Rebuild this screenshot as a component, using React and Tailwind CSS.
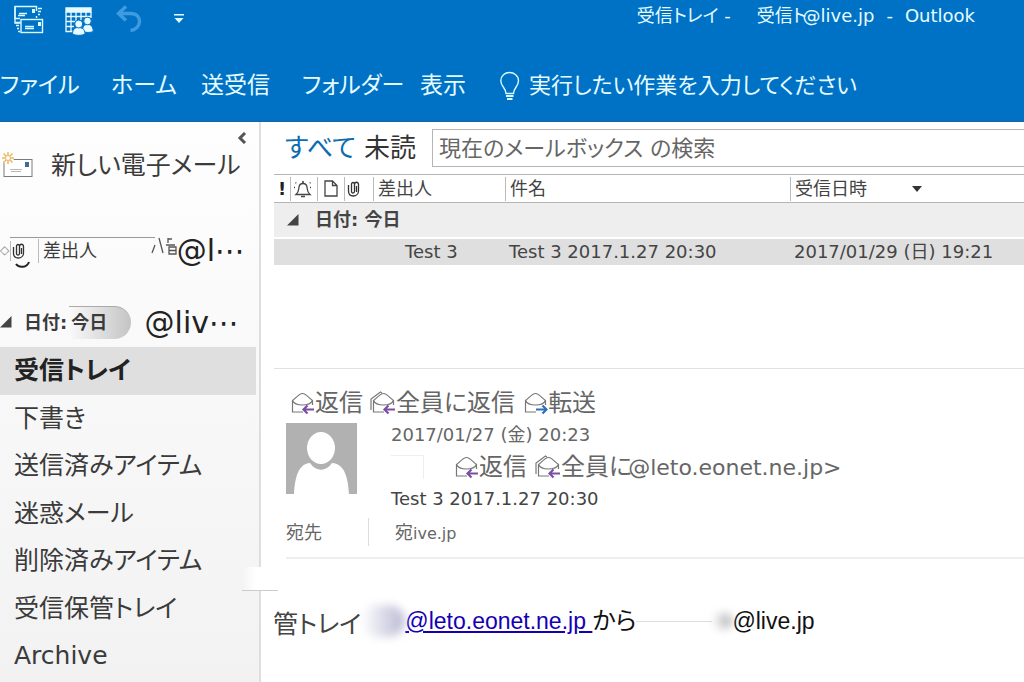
import { useState } from "react";
import clsx from "clsx";

const folders = [
  "受信トレイ",
  "下書き",
  "送信済みアイテム",
  "迷惑メール",
  "削除済みアイテム",
  "受信保管トレイ",
  "Archive",
];

const tabs = [
  { name: "ファイル", width: "w-[111px]" },
  { name: "ホーム", width: "w-[90px]" },
  { name: "送受信", width: "w-[101px]" },
  { name: "フォルダー", width: "w-[118px]" },
  { name: "表示", width: "w-[79px]" },
];

const SendReceiveIcon = () => (
  <svg width="30" height="30" viewBox="0 0 30 30" fill="none" stroke="#d9fbff" strokeWidth="1.4">
    <path d="M6 16.5V18H1V1.500H22.500V6M22.500 11V13" />
    <path d="M1 1.500V13.500H6" />
    <path d="M5 8.500H13M4 10.500H11M24 3.500H28M24 6.500H27M24 9.500H26M1 17.500H5M2 20.500H5M3 23.500H5M4 26.500H6" />
    <rect x="7" y="14.500" width="21.500" height="13" />
    <path d="M11 21.500H20M11 23.500H20" />
    <path d="M18 4h3v4h-3zM24 17h3v4h-3z" fill="#d9fbff" stroke="none" />
  </svg>
);

const CalendarPeopleIcon = () => (
  <svg width="30" height="30" viewBox="0 0 30 30" fill="none" stroke="#e6fbff" strokeWidth="1.3">
    <path d="M1 1H26V5H1z" fill="#e6fbff" />
    <path d="M1 5V24.500H8M26 5V11M6 5V24.500M11 5V15M16 5V13M21 5V10M1 9.500H26M1 14.500H11M1 19.500H9" />
    <g fill="#e6fbff" stroke="#0072c6" strokeWidth="1">
      <path d="M17.500 24c0-5 2-6.500 5-6.500s5.700 1.500 5.700 7c-2 1.300-8 1.300-10.700 0z" />
      <circle cx="22.500" cy="14" r="3.800" />
      <path d="M7.500 27c0-5 2.500-6.500 6-6.500s6.500 1.500 6.500 6.500c-2.500 1.800-10 1.800-12.500 0z" />
      <circle cx="13.700" cy="17" r="4" />
    </g>
  </svg>
);

const UndoIcon = () => (
  <svg width="28" height="28" viewBox="0 0 28 28" fill="none" stroke="#3f9be0" strokeWidth="3.400">
    <path d="M11 1.500L3.500 8.500L11 15.500M4 8.500H15.500C22 8.500 24.500 12.500 24.500 16.500S21 25 15.500 25.500" />
  </svg>
);

const BulbIcon = () => (
  <svg width="22" height="30" viewBox="0 0 22 30" fill="none" stroke="#d9fbff" strokeWidth="1.400">
    <path d="M7 22.500C7 17 1.800 15.500 1.800 9.800C1.800 4.500 6 1.500 10.500 1.500S19.500 4.500 19.500 9.800C19.500 15.500 14.500 17 14.500 22.500z" />
    <path d="M7 25H14.500M8 28H13.500" strokeWidth="2" />
  </svg>
);

const NewMailIcon = () => (
  <svg width="34" height="28" viewBox="0 0 34 28" fill="none" className="shrink-0">
    <rect x="4" y="7.500" width="28" height="17" fill="#fff" stroke="#7b7b7b" />
    <path d="M10 17.500H22M11 19.500H21" stroke="#b9b9b9" />
    <rect x="25" y="10" width="4" height="5" fill="#3f6f8f" />
    <circle cx="8" cy="6" r="6" fill="#fdfdfd" />
    <path d="M8 0V12M2 6H14M3.500 1.500L12.500 10.500M12.500 1.500L3.500 10.500" stroke="#edb95e" strokeWidth="1.500" />
    <circle cx="8" cy="6" r="2.500" fill="#fff" stroke="#edb95e" />
  </svg>
);

const ClipIcon = () => (
  <svg width="13" height="16" viewBox="0 0 13 16" fill="none" stroke="#333" strokeWidth="1.300">
    <path d="M1.500 4V10C1.500 13 3.500 15 6.300 15S11.500 13 11.500 10V3.500C11.500 .5 7.500 .5 7.500 3.500V10.500C7.500 12.500 4.500 12.500 4.500 10.500V3" />
    <path d="M4.500 3C4.500 1 7.500 1 7.500 3M9.500 5V11" />
  </svg>
);

const BellIcon = () => (
  <svg width="20" height="18" viewBox="0 0 20 18" fill="none" stroke="#444" strokeWidth="1.300">
    <path d="M3 14.500C6 12 5.500 10 6 7C6.400 4.500 8 3.500 10 3.500S13.600 4.500 14 7C14.500 10 14 12 17 14.500z" />
    <path d="M10 1V3.500M8 16.500H12" strokeWidth="1.600" />
    <path d="M2.500 2.500L4 4M1 7.500H3M17.500 2.500L16 4M17 7.500H19" strokeDasharray="1 1" />
  </svg>
);

const PageIcon = () => (
  <svg width="14" height="17" viewBox="0 0 14 17" fill="none" stroke="#444" strokeWidth="1.300">
    <path d="M1 1H8.500L13 5.500V16H1zM8.500 1V5.500H13" />
  </svg>
);

const EnvelopeIcon = ({ all, forward }) => (
  <svg width="26" height="24" viewBox="0 0 26 24" fill="none" stroke="#777" strokeWidth="1.200" className="shrink-0">
    {all && <path d="M1 19V8L10.500 1L12 2" />}
    <path d="M14 21H3.500V9.500C7 7 10 2.500 13.500 2.500S20 7 23.500 9.500V14" />
    <path d="M3.500 9.500C5 13 9 14 13.500 14S22 13 23.500 9.500" />
    <path
      d={forward ? "M14 18.500H24M20.500 14.500L24.500 18.500L20.500 22.500" : "M25 18.500H15M18.500 14.500L14.500 18.500L18.500 22.500"}
      stroke={forward ? "#2f6fb7" : "#7a4fa3"}
      strokeWidth="2.200"
    />
  </svg>
);

const Triangle = () => (
  <svg width="12" height="12" viewBox="0 0 12 12" className="shrink-0">
    <path d="M11.500 0V11.500H0z" fill="#444" />
  </svg>
);

const Header = () => (
  <header className="flex h-[122px] flex-col border-b border-[#1c62a0] bg-[#0072c6] text-[#e6fcff]">
    <div className="flex h-[50px] justify-between pl-[14px] pr-[49px]">
      <div className="flex items-start pt-[5px]">
        <button aria-label="すべて送受信" className="mr-[21px]">
          <SendReceiveIcon />
        </button>
        <button aria-label="予定表" className="mr-[20px] pt-[2px]">
          <CalendarPeopleIcon />
        </button>
        <button aria-label="元に戻す" className="mr-[31px]">
          <UndoIcon />
        </button>
        <button aria-label="カスタマイズ" className="pt-[9px]">
          <svg width="10" height="10" viewBox="0 0 10 10" fill="#e6fcff">
            <path d="M0 0H10V1.500H0zM0.500 4H9.500L5 9z" />
          </svg>
        </button>
      </div>
      <h1 className="flex whitespace-pre pt-1 text-[18px] leading-6">
        <span>受信トレイ -</span>
        <span className="ml-[26px]">受信ト</span>
        <span className="-ml-1">@live.jp</span>
        <span className="ml-3">-</span>
        <span className="ml-3">Outlook</span>
      </h1>
    </div>
    <nav className="flex h-[71px] items-center whitespace-nowrap text-[23px]">
      {tabs.map((tab) => (
        <button key={tab.name} className={clsx("shrink-0 text-left", tab.width)}>
          {tab.name}
        </button>
      ))}
      <button className="flex items-center gap-2 text-[22px]">
        <BulbIcon />
        実行したい作業を入力してください
      </button>
    </nav>
  </header>
);

const Sidebar = () => {
  const [selected, setSelected] = useState(folders[0]);

  return (
    <aside className="flex w-[261px] shrink-0 flex-col border-r-2 border-[#dedede] bg-linear-to-b from-[#fefefe] to-[#f2f2f2] text-[#3b3b3b]">
      <div className="flex h-[24px] justify-end pr-[12px] pt-[7px]">
        <button aria-label="折りたたむ">
          <svg width="10" height="12" viewBox="0 0 10 12" fill="none" stroke="#555" strokeWidth="3">
            <path d="M8 1L3 6L8 11" />
          </svg>
        </button>
      </div>
      <button className="flex h-[40px] items-center gap-[17px] whitespace-nowrap text-[25px]">
        <NewMailIcon />
        新しい電子メール
      </button>
      <div className="mt-[44px] flex h-[40px] items-center whitespace-nowrap pr-[14px]">
        <span className="w-[10px] overflow-hidden text-[12px] text-[#888]">◇</span>
        <div className="relative flex h-[26px] w-[146px] items-center border-t border-[#999] text-[18px]">
          <span className="flex h-5 items-center border-l border-[#bbb] pl-px">
            <ClipIcon />
          </span>
          <svg width="16" height="8" viewBox="0 0 16 8" fill="none" className="absolute left-[5px] top-[22px]">
            <path d="M1 4C4 8 12 8 14 2" stroke="#222" strokeWidth="2" />
          </svg>
          <span className="ml-[13px] border-l border-[#bbb] pl-1 leading-6">差出人</span>
        </div>
        <svg width="26" height="18" viewBox="0 0 26 18" fill="none" stroke="#555" strokeWidth="1.300" className="-ml-1 mb-2 shrink-0">
          <path d="M4 8L1 16M8 1L12 16M17 1V6M17 2H21M15 8H24M18 10H25V17H18zM18 13.500H25" />
        </svg>
        <span className="ml-auto text-[30px] text-[#222]">@l⋯</span>
      </div>
      <div className="mt-[32px] flex h-[40px] items-center justify-between pr-[20px]">
        <div className="flex items-center whitespace-nowrap text-[18px] font-bold">
          <Triangle />
          <span className="ml-3">日付:</span>
          <span className="ml-[2px] rounded-r-full border-t border-[#aaa] bg-linear-to-r from-transparent to-[#c4c4c4] pl-[2px] pr-6 leading-8">
            今日
          </span>
        </div>
        <span className="text-[30px] text-[#222]">@liv⋯</span>
      </div>
      <nav className="mt-[5px] grid flex-1 auto-rows-fr pb-[2px] pr-[3px]">
        {folders.map((folder) => (
          <button
            key={folder}
            onClick={() => setSelected(folder)}
            className={clsx(
              "pl-[14px] text-left text-[25px]",
              folder == selected && "bg-[#dfdfdf] font-bold text-[#222]"
            )}
          >
            {folder}
          </button>
        ))}
      </nav>
    </aside>
  );
};

const MessageList = () => (
  <section className="h-[247px] border-b border-[#e1e1e1]">
    <div className="flex h-[52px] items-center whitespace-nowrap">
      <button className="w-[79px] pl-[11px] text-left text-[26px] text-[#0b6cb0]">すべて</button>
      <button className="ml-[11px] text-[26px] text-[#333]">未読</button>
      <input
        aria-label="検索"
        placeholder="現在のメールボックス の検索"
        className="ml-4 h-[38px] min-w-0 flex-1 border border-r-0 border-[#b5b5b5] px-[6px] text-[22px] placeholder:text-[#666]"
      />
    </div>
    <table className="w-full table-fixed text-left text-[18px] text-[#444]">
      <colgroup>
        <col className="w-[16px]" />
        <col className="w-[27px]" />
        <col className="w-[27px]" />
        <col className="w-[29px]" />
        <col className="w-[132px]" />
        <col />
        <col className="w-[234px]" />
      </colgroup>
      <thead>
        <tr className="h-[28px] border-y border-[#b5b5b5] leading-6 *:p-0 *:font-normal">
          <th className="text-center text-[#222]">
            <b>!</b>
          </th>
          <th>
            <div className="flex h-6 items-center border-l border-[#bbb] pl-[2px]">
              <BellIcon />
            </div>
          </th>
          <th>
            <div className="flex h-6 items-center border-l border-[#bbb] pl-[6px]">
              <PageIcon />
            </div>
          </th>
          <th>
            <div className="flex h-6 items-center border-l border-[#bbb] pl-[2px]">
              <ClipIcon />
            </div>
          </th>
          <th>
            <div className="border-l border-[#bbb] pl-1">差出人</div>
          </th>
          <th>
            <div className="border-l border-[#bbb] pl-1">件名</div>
          </th>
          <th>
            <div className="flex items-center border-l border-[#bbb] pl-1">
              受信日時
              <svg width="10" height="6" viewBox="0 0 10 6" className="ml-[45px]">
                <path d="M0 0H10L5 6z" fill="#333" />
              </svg>
            </div>
          </th>
        </tr>
      </thead>
      <tbody>
        <tr className="h-[35px] border-b-2 border-white bg-[#eee]">
          <td colSpan={7} className="p-0 font-bold">
            <div className="flex items-center gap-4 pl-[13px] leading-6">
              <Triangle />
              日付: 今日
            </div>
          </td>
        </tr>
        <tr className="h-[27px] whitespace-nowrap bg-[#dfdfdf] leading-6 *:p-0">
          <td colSpan={4}></td>
          <td className="pl-8!">Test 3</td>
          <td className="pl-1!">Test 3 2017.1.27 20:30</td>
          <td className="pl-1!">2017/01/29 (日) 19:21</td>
        </tr>
      </tbody>
    </table>
  </section>
);

const ReadingPane = () => (
  <section className="whitespace-nowrap pl-3 text-[#666]">
    <div className="flex h-[54px] items-end gap-[7px] pl-[3px] text-[24px] leading-10">
      <button className="flex items-center">
        <EnvelopeIcon />
        返信
      </button>
      <button className="flex items-center">
        <EnvelopeIcon all />
        全員に返信
      </button>
      <button className="flex items-center">
        <EnvelopeIcon forward />
        転送
      </button>
    </div>
    <div className="flex gap-[34px]">
      <svg width="71" height="71" viewBox="0 0 71 71" className="shrink-0">
        <path d="M0 0H71V71H0z" fill="#b1b1b1" />
        <path d="M8 71C9 55 12 41 24 40C30 49 40 49 46 40C59 41 62 55 63 71z" fill="#fff" />
        <ellipse cx="35" cy="25" rx="14" ry="16" fill="#fff" />
      </svg>
      <div className="flex flex-col text-[18px]">
        <span className="leading-6">2017/01/27 (金) 20:23</span>
        <div className="flex h-10 items-center text-[24px]">
          <span className="mr-[29px] h-6 w-[33px] border-r border-t border-[#eee]"></span>
          <EnvelopeIcon />
          返信
          <span className="w-2"></span>
          <EnvelopeIcon all />
          全員に
          <span className="-ml-1 text-[22px]">@leto.eonet.ne.jp&gt;</span>
        </div>
        <span className="leading-6 text-[#444]">Test 3 2017.1.27 20:30</span>
      </div>
    </div>
    <div className="flex h-[48px] items-center border-b-2 border-[#eee] pb-1 text-[18px]">
      <span className="w-[82px]">宛先</span>
      <span className="h-7 border-l border-[#ddd]"></span>
      <span className="ml-[26px]">
        宛<span className="text-[16px]">ive.jp</span>
      </span>
    </div>
  </section>
);

const MessageBody = () => (
  <section className="relative -ml-[13px] flex flex-1 items-start whitespace-nowrap pt-[42px] text-[23px] text-[#111]">
    <span className="absolute -left-[19px] top-[8px] h-[24px] w-[36px] border-b border-[#ccc] bg-linear-to-r from-transparent to-white to-40%"></span>
    <div className="flex h-10 items-center pl-3">
      <span className="mt-2 text-[25px] text-[#444]">管トレイ</span>
      <span className="h-8 w-11 rounded-full bg-linear-to-r from-transparent to-[#b9b9d4] blur-xs"></span>
      <a
        href="mailto:@leto.eonet.ne.jp"
        className="whitespace-pre font-['Liberation_Sans',sans-serif] text-[#1400b4] underline"
      >
        {"@leto.eonet.ne.jp "}
      </a>
      <span className="text-[24px]">から</span>
      <span className="h-px w-[76px] bg-[#ddd]"></span>
      <span className="h-4 w-5 rounded-full bg-linear-to-r from-transparent to-[#aaa] blur-xs"></span>
      <span className="font-['Liberation_Sans',sans-serif]">@live.jp</span>
    </div>
  </section>
);

const App = () => {
  return (
    <div
      lang="ja"
      className="flex min-h-screen flex-col overflow-hidden bg-white font-['DejaVu_Sans','Noto_Sans_CJK_JP',sans-serif] [font-feature-settings:'palt']"
    >
      <Header />
      <div className="flex flex-1">
        <Sidebar />
        <main className="flex min-w-0 flex-1 flex-col pl-[13px]">
          <MessageList />
          <ReadingPane />
          <MessageBody />
        </main>
      </div>
    </div>
  );
};

export default App;
